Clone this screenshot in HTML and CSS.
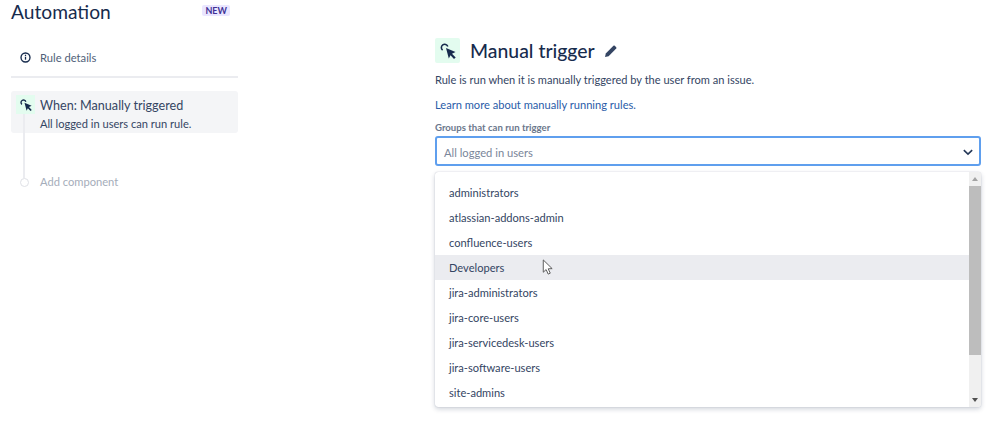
FILE: index.html
```html
<!DOCTYPE html>
<html lang="en">
<head>
<meta charset="utf-8">
<title>Automation</title>
<link rel="stylesheet" href="styles.css">
</head>
<body>
<div class="page">
  <aside class="sidebar">
    <div class="side-head">
      <h1 class="side-title">Automation</h1>
      <span class="lozenge">NEW</span>
    </div>
    <div class="details-row">
      <svg class="info-icon" viewBox="0 0 12 12" width="11" height="11"><circle cx="6" cy="6" r="4.9" fill="none" stroke="#172b4d" stroke-width="1.5"/><rect x="5.3" y="5.2" width="1.4" height="3.2" fill="#172b4d"/><rect x="5.3" y="3" width="1.4" height="1.4" fill="#172b4d"/></svg>
      <span>Rule details</span>
    </div>
    <div class="rule-card">
      <span class="card-icon">
        <svg viewBox="0 0 16 16" width="12" height="12"><path d="M6 5 L15.5 9 L12 10.8 L15.7 14.5 L14 16 L10.5 12.2 L8.8 15.5 Z" fill="#172b4d"/><path d="M2.6 7.2 A3.3 3.3 0 1 1 7.8 3.6" fill="none" stroke="#172b4d" stroke-width="1.8"/></svg>
      </span>
      <div class="card-text">
        <div class="card-title">When: Manually triggered</div>
        <div class="card-sub">All logged in users can run rule.</div>
      </div>
    </div>
    <div class="connector"></div>
    <div class="add-row">
      <span class="add-dot"></span>
      <span>Add component</span>
    </div>
  </aside>
  <main class="main">
    <div class="main-head">
      <span class="head-icon">
        <svg viewBox="0 0 16 16" width="16" height="16"><path d="M6 5 L15.5 9 L12 10.8 L15.7 14.5 L14 16 L10.5 12.2 L8.8 15.5 Z" fill="#172b4d"/><path d="M2.6 7.2 A3.3 3.3 0 1 1 7.8 3.6" fill="none" stroke="#172b4d" stroke-width="1.6"/></svg>
      </span>
      <h2 class="main-title">Manual trigger</h2>
      <svg class="pencil" viewBox="0 0 14 14" width="14" height="14"><path d="M1 13 L1.8 9.4 L9.4 1.8 A1 1 0 0 1 10.8 1.8 L12.2 3.2 A1 1 0 0 1 12.2 4.6 L4.6 12.2 Z" fill="#344563"/></svg>
    </div>
    <p class="desc">Rule is run when it is manually triggered by the user from an issue.</p>
    <a class="learn" href="#">Learn more about manually running rules.</a>
    <div class="field-label">Groups that can run trigger</div>
    <div class="select">
      <span>All logged in users</span>
      <svg viewBox="0 0 12 8" width="10" height="7"><path d="M1 1.2 L6 6 L11 1.2" fill="none" stroke="#253858" stroke-width="1.9"/></svg>
    </div>
    <div class="menu">
      <ul class="options">
        <li>administrators</li>
        <li>atlassian-addons-admin</li>
        <li>confluence-users</li>
        <li class="hover">Developers<svg class="cursor" viewBox="0 0 12 18" width="12" height="17"><path d="M1 1 L1 14 L4 11.2 L6.2 16 L8.4 15 L6.2 10.4 L10.4 10.2 Z" fill="#fff" stroke="#555" stroke-width="1"/></svg></li>
        <li>jira-administrators</li>
        <li>jira-core-users</li>
        <li>jira-servicedesk-users</li>
        <li>jira-software-users</li>
        <li>site-admins</li>
      </ul>
      <div class="scrollbar">
        <span class="arrow-up"></span>
        <span class="thumb"></span>
        <span class="arrow-down"></span>
      </div>
    </div>
  </main>
</div>
</body>
</html>
```
FILE: styles.css
```css
* { box-sizing: border-box; }
html, body { margin: 0; padding: 0; background: #fff; }
body {
  width: 999px;
  height: 425px;
  overflow: hidden;
  font-family: "Lato", "Open Sans", sans-serif;
  color: #172b4d;
}
.page { display: flex; padding-left: 11px; }
.sidebar { width: 227px; flex: none; }
.side-head {
  display: flex;
  justify-content: space-between;
  align-items: flex-start;
  height: 22px;
  margin-bottom: 27px;
}
.side-title { margin: 0; font-size: 19.2px; font-weight: 400; line-height: 23px; color: #172b4d; }
.lozenge {
  margin-top: 5px;
  margin-right: 8px;
  background: #eae6ff;
  color: #403294;
  font-size: 9px;
  font-weight: 700;
  line-height: 11px;
  padding: 0 3px;
  border-radius: 2px;
}
.details-row {
  display: flex;
  align-items: center;
  gap: 9px;
  padding: 0 0 10px 9px;
  height: 29px;
  font-size: 11.2px;
  color: #505f79;
  border-bottom: 2px solid #ebecf0;
  margin-bottom: 13px;
}
.rule-card {
  display: flex;
  gap: 5px;
  height: 42px;
  background: #f4f5f7;
  border-radius: 3px;
  padding-top: 4px;
  padding-left: 5px;
}
.card-icon {
  width: 19px;
  height: 19px;
  background: #e3fcef;
  display: flex;
  align-items: center;
  justify-content: center;
  flex: none;
}
.card-text { padding-top: 2px; }
.card-title { font-size: 12.6px; line-height: 17px; color: #344563; }
.card-sub { margin-top: 2px; font-size: 11.1px; line-height: 15px; color: #344563; }
.connector { width: 2px; height: 64px; margin-left: 12px; margin-top: -19px; background: #ebecf0; position: relative; }
.add-row {
  display: flex;
  align-items: center;
  gap: 11px;
  margin-left: 9px;
  margin-top: -4px;
  font-size: 11.15px;
  line-height: 16px;
  color: #a5adba;
  position: relative;
}
.add-dot { width: 9px; height: 9px; border: 1px solid #dfe1e6; border-radius: 50%; background: #fff; flex: none; }
.main { margin-left: 197px; width: 546px; flex: none; }
.main-head { display: flex; align-items: center; height: 25px; margin-top: 38px; }
.head-icon {
  width: 25px;
  height: 25px;
  background: #e3fcef;
  border-radius: 2px;
  display: flex;
  align-items: center;
  justify-content: center;
}
.main-title { margin: 0 0 0 10px; font-size: 19.4px; font-weight: 500; line-height: 25px; color: #172b4d; }
.pencil { margin-left: 9px; }
.desc { margin: 9px 0 0; font-size: 11.07px; line-height: 16px; color: #344563; }
.learn { display: block; margin-top: 9px; font-size: 11.1px; line-height: 16px; color: #2a5ca8; text-decoration: none; }
.field-label { margin-top: 9px; font-size: 9.6px; font-weight: 700; line-height: 12px; color: #6b778c; }
.select {
  display: flex;
  align-items: center;
  justify-content: space-between;
  height: 30px;
  margin-top: 2px;
  padding: 2px 6px 0 7px;
  border: 2px solid #5f9fee;
  border-radius: 3px;
  font-size: 11.2px;
  color: #7a869a;
}
.menu {
  display: flex;
  height: 235px;
  margin-top: 6px;
  border-radius: 3px;
  box-shadow: 0 0 1px rgba(9,30,66,.31), 0 2px 5px rgba(9,30,66,.2);
  overflow: hidden;
}
.options { list-style: none; margin: 0; padding: 8px 0 0; flex: 1; font-size: 11.1px; color: #344563; }
.options li { display: flex; align-items: center; height: 25px; padding-left: 14px; position: relative; }
.options li.hover { background: #ebecf0; }
.cursor { position: absolute; left: 107px; top: 4px; }
.scrollbar { width: 12px; flex: none; background: #f0f0f0; display: flex; flex-direction: column; align-items: center; }
.arrow-up { width: 0; height: 0; margin: 5px 0; border: 3px solid transparent; border-top: 0; border-bottom: 4px solid #a3a3a3; }
.thumb { width: 100%; height: 169px; background: #bdbdbd; }
.arrow-down { margin-top: auto; margin-bottom: 5px; width: 0; height: 0; border: 3px solid transparent; border-bottom: 0; border-top: 4px solid #505050; }
```
